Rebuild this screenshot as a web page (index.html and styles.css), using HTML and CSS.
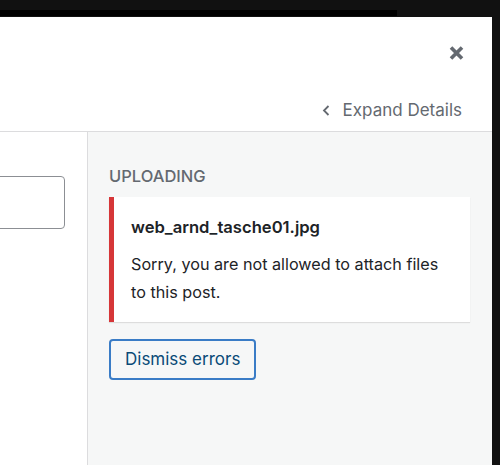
FILE: index.html
```html
<!DOCTYPE html>
<html lang="en">
<head>
    <meta charset="UTF-8">
    <meta name="viewport" content="width=device-width, initial-scale=1.0">
    <title>Upload media</title>
    <link rel="stylesheet" href="styles.css">
</head>
<body>
    <div class="backdrop">
        <div class="backdrop-strip"></div>
    </div>

    <div class="media-modal">
        <header class="modal-header">
            <button class="close-btn" aria-label="Close dialog">
                <svg width="15" height="14" viewBox="0 0 15 14">
                    <path d="M2 1.5 L13 12.5 M13 1.5 L2 12.5" stroke="#646970" stroke-width="3.6" fill="none"/>
                </svg>
            </button>
            <a class="expand-link" href="#">
                <svg width="8" height="11" viewBox="0 0 8 11">
                    <polyline points="6.5,1 2,5.5 6.5,10" stroke="#646970" stroke-width="1.8" fill="none"/>
                </svg>
                <span>Expand Details</span>
            </a>
        </header>

        <div class="modal-body">
            <section class="attachments">
                <input type="text" class="search-field">
            </section>

            <aside class="media-sidebar">
                <h2 class="sidebar-title">Uploading</h2>
                <div class="upload-error">
                    <div class="error-filename">web_arnd_tasche01.jpg</div>
                    <p class="error-message">Sorry, you are not allowed to attach files to this post.</p>
                </div>
                <button class="dismiss-btn">Dismiss errors</button>
            </aside>
        </div>
    </div>
</body>
</html>
```

FILE: styles.css
```css
:root {
    --text: #1d2327;
    --muted: #646970;
    --border: #dcdcde;
    --sidebar-bg: #f6f7f7;
    --error: #d63638;
    --focus: #3a7cc6;
}

* {
    box-sizing: border-box;
    margin: 0;
    padding: 0;
}

body {
    font-family: Inter, "Liberation Sans", sans-serif;
    background: #111;
    height: 465px;
    overflow: hidden;
    color: var(--text);
}

/* 背景遮罩 */
.backdrop {
    height: 17px;
    padding-top: 10px;
}

.backdrop-strip {
    width: 397px;
    height: 6px;
    background: #000;
}

/* 弹窗 */
.media-modal {
    width: 492px;
    height: 448px;
    background: #fff;
    display: flex;
    flex-direction: column;
}

.modal-header {
    display: flex;
    flex-direction: column;
    align-items: flex-end;
    padding: 29px 30px 11px 0;
    border-bottom: 1px solid var(--border);
}

.close-btn {
    background: none;
    border: none;
    width: 15px;
    height: 14px;
    margin-right: -2px;
    cursor: pointer;
    display: block;
}

.close-btn svg {
    display: block;
}

.expand-link {
    margin-top: 40px;
    display: flex;
    align-items: center;
    gap: 13px;
    color: var(--muted);
    text-decoration: none;
    font-size: 17px;
    line-height: 20px;
}

.expand-link svg {
    display: block;
    margin-top: 1px;
}

/* 主体 */
.modal-body {
    flex: 1;
    display: flex;
    overflow: hidden;
}

.attachments {
    width: 87px;
    overflow: hidden;
    padding-top: 44px;
}

.search-field {
    display: block;
    width: 105px;
    height: 53px;
    margin-left: -40px;
    border: 1px solid #8c8f94;
    border-radius: 4px;
    background: #fff;
}

.media-sidebar {
    flex: 1;
    background: var(--sidebar-bg);
    border-left: 1px solid var(--border);
    padding: 34px 22px 0 21px;
}

.sidebar-title {
    font-size: 16.5px;
    line-height: 20px;
    font-weight: 500;
    text-transform: uppercase;
    color: var(--muted);
    margin-bottom: 11px;
}

.upload-error {
    background: #fff;
    border-left: 5px solid var(--error);
    box-shadow: 0 1px 1px rgba(0, 0, 0, 0.1);
    padding: 19px 22px 16px 17px;
}

.error-filename {
    font-size: 16.6px;
    line-height: 22px;
    font-weight: 600;
}

.error-message {
    margin-top: 13px;
    font-size: 16.2px;
    line-height: 27.5px;
}

.dismiss-btn {
    margin-top: 17px;
    height: 41px;
    padding: 0 14px;
    font-family: inherit;
    font-size: 17px;
    line-height: 37px;
    color: #0a4b78;
    background: var(--sidebar-bg);
    border: 2px solid var(--focus);
    border-radius: 4px;
    cursor: pointer;
}
```
